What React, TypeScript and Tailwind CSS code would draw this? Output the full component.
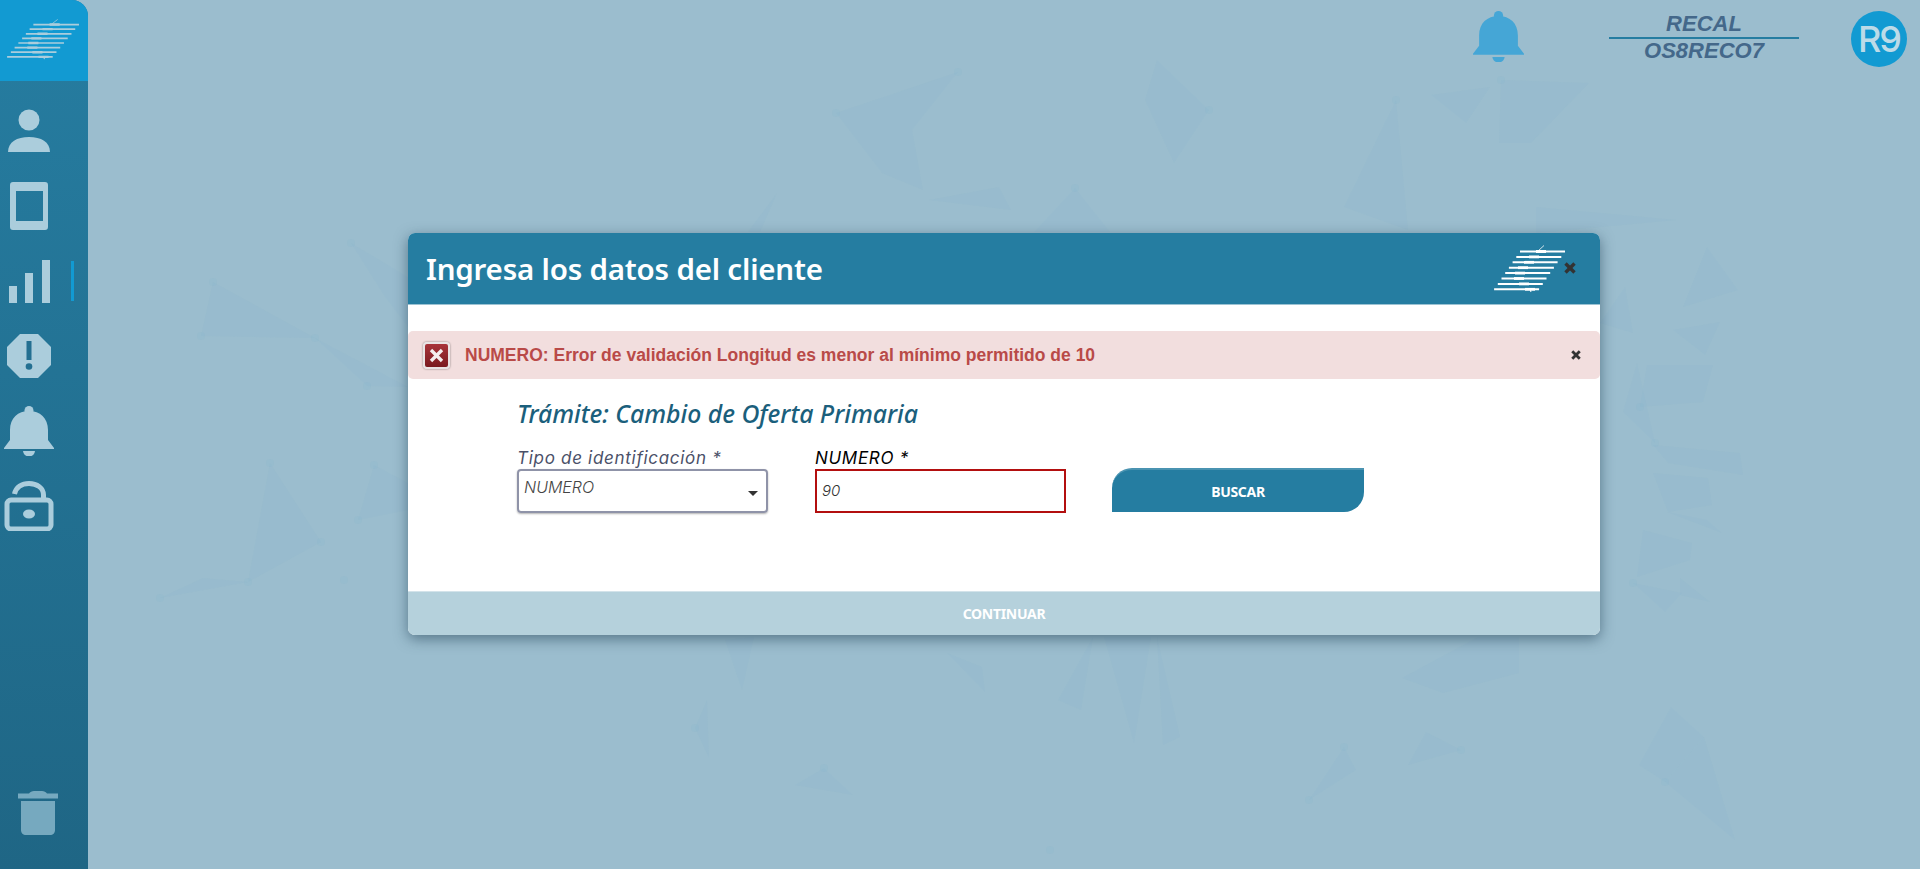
import React from 'react';

const shards = [
  // above the dialog
  '836,113 958,72 912,130 923,190 882,173', '1157,60 1209,110 1174,163 1145,100', '1431,95 1490,87 1466,123',
  '1501,80 1589,83 1531,143 1499,143', '929,200 999,187 1011,210', '1034,232 1075,188 1110,232', '748,232 777,193 760,232',
  '1344,207 1396,100 1408,230', '1536,207 1677,220 1536,233',
  // below the dialog
  '1402,678 1478,637 1519,637 1519,673 1443,693', '947,653 982,667 985,692', '1058,700 1093,637 1081,710',
  '1104,637 1151,637 1134,743', '1157,637 1180,737 1163,745', '695,728 707,700 709,758', '795,785 824,768 853,795',
  '1426,732 1461,750 1408,765', '1344,747 1356,770 1309,800', '1671,707 1704,737 1665,782 1639,765',
  '1704,737 1735,840 1665,782', '754,637 742,690 725,640',
  // left
  '270,463 321,542 248,582', '160,598 203,578 248,582', '213,282 201,336 315,338', '315,338 367,386 408,387',
  '351,243 408,277 408,327 385,297', '374,465 408,483 408,510 358,520',
  // right
  '1707,247 1738,290 1683,307', '1673,330 1720,322 1705,355', '1647,365 1713,365 1703,402 1640,407',
  '1600,323 1625,287 1633,333', '1637,363 1655,443 1623,412', '1653,445 1740,453 1743,475 1668,463',
  '1653,473 1708,478 1712,505 1668,512', '1667,512 1722,533 1707,520', '1643,530 1692,543 1690,560 1637,577',
  '1633,583 1682,593 1665,612', '1680,578 1710,602 1680,595',
];

const dots = [
  [213, 282], [201, 336], [315, 338], [367, 386], [351, 243], [270, 463], [321, 542], [248, 582], [160, 598], [344, 580],
  [374, 465], [358, 520], [958, 72], [836, 113], [1209, 110], [1396, 100], [1075, 188], [1501, 80], [695, 728], [824, 768],
  [1461, 750], [1344, 747], [1665, 782], [1050, 850], [1309, 800], [1640, 407], [1655, 443], [1633, 583],
];

function Backdrop() {
  return (
    <svg className="absolute left-0 top-0" width="1920" height="869" viewBox="0 0 1920 869" aria-hidden="true">
      {shards.map((p, i) => (
        <polygon key={i} points={p} fill="#7fb3ca" opacity="0.1" />
      ))}
      {dots.map(([x, y], i) => (
        <circle key={i} cx={x} cy={y} r="4" fill="#7fb3ca" opacity="0.12" />
      ))}
    </svg>
  );
}

function Logo({ className, color }: { className: string; color: string }) {
  const blobs = [47, 40, 35, 29, 26, 25, 30, 36];
  return (
    <svg className={className} viewBox="0 0 72 48" preserveAspectRatio="none" fill="none" stroke={color}>
      {blobs.map((b, i) => {
        const y = 6.5 + 5.4 * i;
        return (
          <g key={i}>
            <line x1={26 - 3.7 * i} x2={71 - 3.7 * i} y1={y} y2={y} strokeWidth="2" />
            <line x1={b - 5} x2={b + 5} y1={y} y2={y} strokeWidth="2.800" />
          </g>
        );
      })}
      <line x1="44" y1="6" x2="50" y2="0.5" strokeWidth="0.8" />
      <line x1="36" y1="44.5" x2="37" y2="47" strokeWidth="1" />
    </svg>
  );
}

const IC = '#abcddc';

function BellIcon({ color, className }: { color: string; className: string }) {
  return (
    <svg className={className} viewBox="0 0 50 50" fill={color}>
      <circle cx="25" cy="4.500" r="4.500" />
      <path d="M25 5C36 5 44 12 44 24V34L50 42V43H0V42L6 34V24C6 12 14 5 25 5Z" />
      <path d="M19 45H31C30.500 48.500 28 50.500 25 50.500S19.500 48.500 19 45Z" />
    </svg>
  );
}

function SideRow({ children }: { children: React.ReactNode }) {
  return <div className="flex h-[75px] items-center pl-1">{children}</div>;
}

function Sidebar() {
  return (
    <aside className="relative z-10 flex h-screen w-[88px] shrink-0 flex-col overflow-hidden rounded-tr-[16px] bg-gradient-to-b from-[#267da1] to-[#1f6685]">
      <div className="flex h-[81px] items-start bg-[#129ad2] pl-[7px] pt-[19px]">
        <Logo className="h-[41px] w-[73px]" color="#abcddc" />
      </div>
      <div className="pt-[12px]">
        <SideRow>
          <svg className="h-[50px] w-[50px]" viewBox="0 0 50 50" fill={IC}>
            <circle cx="25" cy="14" r="10.500" />
            <path d="M4 46C4 36 13 31 25 31S46 36 46 46Z" />
          </svg>
        </SideRow>
        <SideRow>
          <svg className="h-[50px] w-[50px]" viewBox="0 0 50 50" fill={IC} fillRule="evenodd">
            <path d="M9 1H41C43 1 44 2 44 4V46C44 48 43 49 41 49H9C7 49 6 48 6 46V4C6 2 7 1 9 1ZM12 10V40H39V10Z" />
          </svg>
        </SideRow>
        <SideRow>
          <svg className="h-[50px] w-[50px]" viewBox="0 0 50 50" fill={IC}>
            <rect x="5" y="30" width="8" height="17" />
            <rect x="21" y="17" width="8" height="30" />
            <rect x="38" y="4" width="8" height="43" />
          </svg>
          <div className="ml-[17px] h-[40px] w-[3px] bg-[#129ad2]" />
        </SideRow>
        <SideRow>
          <svg className="h-[50px] w-[50px]" viewBox="0 0 50 50">
            <path d="M16 3H34L47 16V34L34 47H16L3 34V16Z" fill={IC} />
            <rect x="22.500" y="10" width="5" height="19" fill="#236f91" />
            <circle cx="25" cy="35.500" r="3.300" fill="#236f91" />
          </svg>
        </SideRow>
        <SideRow>
          <BellIcon color={IC} className="h-[50px] w-[50px]" />
        </SideRow>
        <SideRow>
          <svg className="h-[50px] w-[50px]" viewBox="0 0 50 50">
            <path d="M10.500 13C12 6 18 2.500 25 2.500C33 2.500 39.500 7 39.500 14V18" fill="none" stroke={IC} strokeWidth="5" />
            <rect x="3" y="19" width="44" height="29" rx="4" fill="none" stroke={IC} strokeWidth="5" />
            <ellipse cx="25" cy="33" rx="6" ry="4.500" fill={IC} />
          </svg>
        </SideRow>
      </div>
      <svg className="mb-[34px] ml-[18px] mt-auto h-[44px] w-[40px]" viewBox="0 0 40 44" fill="#76a9bf">
        <path d="M0 2.500H11C12 1 14 0 16 0H24C26 0 28 1 29 2.500H40V7.500H0Z" />
        <path d="M3 10H37V39C37 42 35 44 32 44H8C5 44 3 42 3 39Z" />
      </svg>
    </aside>
  );
}

function TopBar() {
  return (
    <header className="relative z-10 flex items-start justify-end pr-[13px] pt-[11px]">
      <BellIcon color="#45a6d6" className="mr-[85px] h-[51px] w-[51px]" />
      <div className="mr-[52px] w-[190px] text-center font-['Liberation_Sans',sans-serif] text-[22px] font-bold italic leading-none text-[#44688a]">
        <div className="h-[26px] pt-[2px]">RECAL</div>
        <div className="h-[2px] bg-[#257da1]" />
        <div className="pt-[1px]">OS8RECO7</div>
      </div>
      <div className="flex h-[56px] w-[56px] items-center justify-center rounded-full bg-[#129ad2] font-['Inter',sans-serif] text-[36px] font-medium tracking-[-2px] text-[#bcdbe8]">
        R9
      </div>
    </header>
  );
}

function CloseIcon({ size }: { size: string }) {
  return (
    <svg className={size} viewBox="0 0 12 12" stroke="#333" strokeWidth="3.400">
      <line x1="1.500" y1="1.500" x2="10.500" y2="10.500" />
      <line x1="10.500" y1="1.500" x2="1.500" y2="10.500" />
    </svg>
  );
}

function Dialog() {
  return (
    <div className="mb-[1px] flex h-[402px] w-[1192px] flex-col overflow-hidden rounded-[7px] bg-white shadow-[0_4px_14px_rgba(30,60,80,0.55)]">
      <div className="flex h-[72px] shrink-0 items-center border-b border-[#9cc3d3] bg-[#257da1] pl-[18px] pr-[24px]">
        <h1 className="pt-[2px] font-['Noto_Sans',sans-serif] text-[29.5px] font-semibold tracking-[-0.2px] text-white">Ingresa los datos del cliente</h1>
        <Logo className="ml-auto h-[48px] w-[72px]" color="#ffffff" />
        <CloseIcon size="mb-[2px] ml-[-2px] h-[12px] w-[12px]" />
      </div>

      <div className="mt-[26px] flex h-[48px] shrink-0 items-center rounded-[5px] bg-[#f2dede] pl-[15px] pr-[19px]">
        <div className="flex h-[27px] w-[27px] items-center justify-center rounded-[4px] border-2 border-[#e9e4e4] bg-gradient-to-b from-[#a8343a] to-[#7a1a1f] shadow-[0_0_2px_rgba(0,0,0,0.5)]">
          <svg className="h-[15px] w-[15px]" viewBox="0 0 15 15" stroke="#f4eeee" strokeWidth="3.400">
            <line x1="2" y1="2" x2="13" y2="13" />
            <line x1="13" y1="2" x2="2" y2="13" />
          </svg>
        </div>
        <p className="ml-[15px] font-['Liberation_Sans',sans-serif] text-[17.5px] font-bold text-[#b94a48]">
          NUMERO: Error de validación Longitud es menor al mínimo permitido de 10
        </p>
        <div className="ml-auto">
          <CloseIcon size="h-[10px] w-[10px]" />
        </div>
      </div>

      <div className="flex-1 pl-[109px]">
        <h2 className="mt-[19px] font-['Noto_Sans',sans-serif] text-[24.75px] font-medium italic leading-[32px] text-[#1b5f7c]">
          Trámite: Cambio de Oferta Primaria
        </h2>
        <div className="mt-[17px] flex items-start font-['Inter',sans-serif] italic">
          <div className="w-[251px]">
            <label className="block text-[17px] leading-[22px] tracking-[0.7px] text-[#4a5068]">Tipo de identificación *</label>
            <div className="relative flex h-[44px] items-start rounded-[4px] border-2 border-[#8f93a8] pl-[5px] pt-[4px] text-[16px] font-light text-[#444] shadow-[0_1px_2px_rgba(0,0,0,0.3)]">
              NUMERO
              <span className="absolute right-[8px] top-[20px] h-0 w-0 border-x-[5px] border-t-[5px] border-x-transparent border-t-[#333]" />
            </div>
          </div>
          <div className="ml-[47px] w-[251px]">
            <label className="block text-[17px] leading-[22px] tracking-[0.7px] text-black">NUMERO *</label>
            <div className="flex h-[44px] items-center border-2 border-[#b30f0f] pl-[5px] text-[15px] font-light text-[#333]">90</div>
          </div>
          <button className="ml-[46px] mt-[21px] h-[44px] w-[252px] rounded-br-[20px] rounded-tl-[20px] border-t-2 border-[#4a93b1] bg-[#257da1] font-['Noto_Sans',sans-serif] text-[14px] font-bold not-italic tracking-[-0.3px] text-white">
            BUSCAR
          </button>
        </div>
      </div>

      <div className="flex h-[44px] shrink-0 items-center justify-center border-t border-[#d3e3ea] bg-[#b5d1dc] font-['Noto_Sans',sans-serif] text-[14px] font-bold tracking-[-0.3px] text-white">
        CONTINUAR
      </div>
    </div>
  );
}

export default function App() {
  return (
    <div className="relative flex h-screen overflow-hidden bg-[#9bbdce]">
      <Backdrop />
      <Sidebar />
      <main className="relative min-w-0 flex-1">
        <TopBar />
        <div className="absolute inset-0 flex items-center justify-center">
          <Dialog />
        </div>
      </main>
    </div>
  );
}
